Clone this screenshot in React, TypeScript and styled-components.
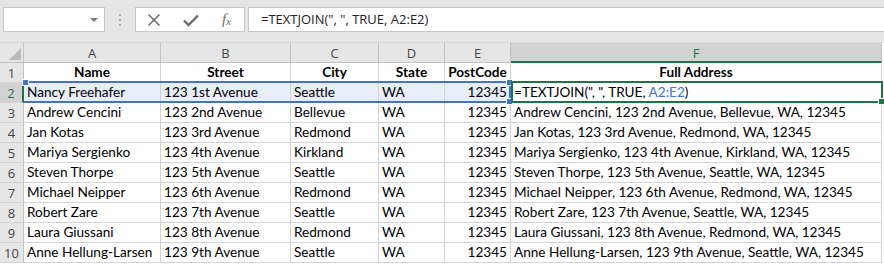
import React, { FC } from "react";
import styled, { createGlobalStyle } from "styled-components";

//******** DATA ********//

interface IRow {
  name: string;
  street: string;
  city: string;
  state: string;
  postCode: string;
}

const rows: IRow[] = [
  { name: "Nancy Freehafer", street: "123 1st Avenue", city: "Seattle", state: "WA", postCode: "12345" },
  { name: "Andrew Cencini", street: "123 2nd Avenue", city: "Bellevue", state: "WA", postCode: "12345" },
  { name: "Jan Kotas", street: "123 3rd Avenue", city: "Redmond", state: "WA", postCode: "12345" },
  { name: "Mariya Sergienko", street: "123 4th Avenue", city: "Kirkland", state: "WA", postCode: "12345" },
  { name: "Steven Thorpe", street: "123 5th Avenue", city: "Seattle", state: "WA", postCode: "12345" },
  { name: "Michael Neipper", street: "123 6th Avenue", city: "Redmond", state: "WA", postCode: "12345" },
  { name: "Robert Zare", street: "123 7th Avenue", city: "Seattle", state: "WA", postCode: "12345" },
  { name: "Laura Giussani", street: "123 8th Avenue", city: "Redmond", state: "WA", postCode: "12345" },
  { name: "Anne Hellung-Larsen", street: "123 9th Avenue", city: "Seattle", state: "WA", postCode: "12345" },
];

const columns = ["A", "B", "C", "D", "E", "F"];
const headers = ["Name", "Street", "City", "State", "PostCode", "Full Address"];

const BLUE = "#4472c4";
const GREEN = "#217346";

//******** COMPONENTS ********//

const Formula: FC = () => (
  <>
    =TEXTJOIN(", ", TRUE, <SRef>A2:E2</SRef>)
  </>
);

const App: FC = () => {
  return (
    <>
      <GlobalStyle />
      <SToolbar>
        <SNameBox>
          <SArrow />
        </SNameBox>
        <SDots>
          <span />
          <span />
          <span />
        </SDots>
        <SButtons>
          <svg width="14" height="14" viewBox="0 0 14 14">
            <path d="M1.5 1.5 L12.5 12.5 M12.5 1.5 L1.5 12.5" stroke="#6b6b6b" strokeWidth="1.5" fill="none" />
          </svg>
          <svg width="18" height="14" viewBox="0 0 18 14">
            <path d="M2 7.5 L6.5 12 L16 2.5" stroke="#6b6b6b" strokeWidth="2.4" fill="none" />
          </svg>
          <SFx>
            f<sub>x</sub>
          </SFx>
        </SButtons>
        <SFormulaInput>=TEXTJOIN(", ", TRUE, A2:E2)</SFormulaInput>
      </SToolbar>

      <SSheet>
        <SCorner>
          <svg width="12" height="12" viewBox="0 0 12 12">
            <polygon points="12,0 12,12 0,12" fill="#b9b9b9" />
          </svg>
        </SCorner>
        {columns.map((c) => (
          <SColHeader key={c} $selected={c === "F"}>
            {c}
          </SColHeader>
        ))}

        <SRowHeader>1</SRowHeader>
        {headers.map((h) => (
          <SCell key={h} $bold $align="center">
            {h}
          </SCell>
        ))}

        {rows.map((r, i) => {
          const n = i + 2;
          const inRange = n === 2;
          return (
            <React.Fragment key={r.name}>
              <SRowHeader $selected={inRange}>{n}</SRowHeader>
              <SCell $range={inRange}>{r.name}</SCell>
              <SCell $range={inRange}>{r.street}</SCell>
              <SCell $range={inRange}>{r.city}</SCell>
              <SCell $range={inRange}>{r.state}</SCell>
              <SCell $range={inRange} $align="right">
                {r.postCode}
              </SCell>
              <SCell>
                {inRange ? (
                  <Formula />
                ) : (
                  `${r.name}, ${r.street}, ${r.city}, ${r.state}, ${r.postCode}`
                )}
              </SCell>
            </React.Fragment>
          );
        })}

        <SRangeBox>
          <SHandle $x="left" $y="top" />
          <SHandle $x="right" $y="top" />
          <SHandle $x="right" $y="bottom" />
        </SRangeBox>
        <SActiveBox>
          <SFillHandle />
        </SActiveBox>
      </SSheet>
    </>
  );
};

export default App;

//******** STYLES ********//

const GlobalStyle = createGlobalStyle`
  body {
    margin: 0;
    background: #ffffff;
    font-family: Lato, "Noto Sans", sans-serif;
  }
`;

const SToolbar = styled.div`
  height: 43px;
  box-sizing: border-box;
  background: #e6e6e6;
  display: flex;
  align-items: flex-start;
  padding: 7px 0 0 3px;
  border-bottom: 1px solid #d9d9d9;
`;

const SNameBox = styled.div`
  width: 102px;
  height: 25px;
  box-sizing: border-box;
  background: #fff;
  border: 1px solid #c6c6c6;
  position: relative;
`;

const SArrow = styled.div`
  position: absolute;
  right: 6px;
  top: 10px;
  width: 0;
  height: 0;
  border-left: 4px solid transparent;
  border-right: 4px solid transparent;
  border-top: 4px solid #7a7a7a;
`;

const SDots = styled.div`
  width: 30px;
  height: 25px;
  display: flex;
  flex-direction: column;
  align-items: center;
  justify-content: center;
  gap: 3px;
  & span {
    width: 2px;
    height: 2px;
    background: #a6a6a6;
  }
`;

const SButtons = styled.div`
  width: 110px;
  height: 25px;
  box-sizing: border-box;
  background: #fff;
  border: 1px solid #c6c6c6;
  display: flex;
  align-items: center;
  justify-content: space-around;
  padding: 0 2px 0 0;
`;

const SFx = styled.span`
  font-family: "Liberation Serif", serif;
  font-style: italic;
  font-size: 15px;
  color: #6b6b6b;
  & sub {
    font-size: 11px;
    vertical-align: -1px;
  }
`;

const SFormulaInput = styled.div`
  flex: 1;
  margin-left: 3px;
  height: 25px;
  box-sizing: border-box;
  background: #fff;
  border: 1px solid #c6c6c6;
  border-right: none;
  padding: 0 0 0 12px;
  font-family: "Open Sans", sans-serif;
  font-size: 13px;
  line-height: 23px;
  color: #222;
  white-space: nowrap;
`;

const SSheet = styled.div`
  position: relative;
  display: grid;
  grid-template-columns: 24px 137px 130px 88px 66px 66px 371px;
  grid-auto-rows: 20px;
  font-size: 13.6px;
  color: #000;
`;

const SHeaderBase = styled.div`
  box-sizing: border-box;
  background: #e6e6e6;
  border-right: 1px solid #c3c3c3;
  border-bottom: 1px solid #c3c3c3;
  display: flex;
  align-items: center;
  justify-content: center;
  font-family: "Open Sans", sans-serif;
  font-size: 13px;
  color: #444;
`;

const SCorner = styled(SHeaderBase)`
  align-items: flex-end;
  justify-content: flex-end;
  padding: 0 2px 2px 0;
`;

const SColHeader = styled(SHeaderBase)<{ $selected?: boolean }>`
  background: ${(p) => (p.$selected ? "#d2d2d2" : "#e6e6e6")};
  color: ${(p) => (p.$selected ? GREEN : "#444")};
  border-bottom: ${(p) => (p.$selected ? `2px solid ${GREEN}` : "1px solid #c3c3c3")};
  padding-top: ${(p) => (p.$selected ? "1px" : "0")};
`;

const SRowHeader = styled(SHeaderBase)<{ $selected?: boolean }>`
  background: ${(p) => (p.$selected ? "#d2d2d2" : "#e6e6e6")};
  color: ${(p) => (p.$selected ? GREEN : "#444")};
  border-right: ${(p) => (p.$selected ? `2px solid ${GREEN}` : "1px solid #c3c3c3")};
  border-bottom-color: #d4d4d4;
`;

const SCell = styled.div<{ $bold?: boolean; $align?: "left" | "center" | "right"; $range?: boolean }>`
  box-sizing: border-box;
  border-right: 1px solid #d4d4d4;
  border-bottom: 1px solid #d4d4d4;
  padding: 0 3px;
  line-height: 19px;
  white-space: nowrap;
  overflow: hidden;
  font-weight: ${(p) => (p.$bold ? 700 : 400)};
  text-align: ${(p) => p.$align ?? "left"};
  background: ${(p) => (p.$range ? "#e8eef8" : "#fff")};
`;

const SRef = styled.span`
  color: ${BLUE};
`;

const SRangeBox = styled.div`
  position: absolute;
  left: 24px;
  top: 38px;
  width: 487px;
  height: 22px;
  box-sizing: border-box;
  border: 2px solid ${BLUE};
  border-left: none;
  pointer-events: none;
`;

const SHandle = styled.div<{ $x: "left" | "right"; $y: "top" | "bottom" }>`
  position: absolute;
  width: 5px;
  height: 5px;
  background: ${BLUE};
  border: 1px solid #fff;
  ${(p) => (p.$x === "left" ? "left: -2px;" : "right: -4px;")}
  ${(p) => (p.$y === "top" ? "top: -4px;" : "bottom: -4px;")}
`;

const SActiveBox = styled.div`
  position: absolute;
  left: 511px;
  top: 38px;
  width: 372px;
  height: 22px;
  box-sizing: border-box;
  border: 2px solid ${GREEN};
  pointer-events: none;
`;

const SFillHandle = styled.div`
  position: absolute;
  right: -4px;
  bottom: -4px;
  width: 5px;
  height: 5px;
  background: ${GREEN};
  border: 1px solid #fff;
`;
